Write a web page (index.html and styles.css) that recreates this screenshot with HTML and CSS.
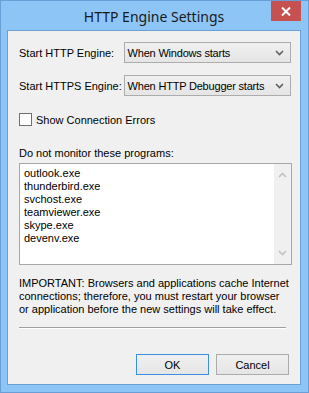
FILE: index.html
```html
<!DOCTYPE html>
<html lang="en">
<head>
    <meta charset="UTF-8">
    <meta name="viewport" content="width=device-width, initial-scale=1.0">
    <title>HTTP Engine Settings</title>
    <link rel="stylesheet" href="styles.css">
</head>
<body>

<div class="window">
    <!-- Title bar -->
    <div class="titlebar">
        <span class="title">HTTP Engine Settings</span>
        <button class="close-button">
            <svg width="10" height="9" viewBox="0 0 10 9">
                <path d="M1 0.5 L9 8.5 M9 0.5 L1 8.5" stroke="#fff" stroke-width="2"/>
            </svg>
        </button>
    </div>

    <!-- Dialog body -->
    <div class="client">
        <div class="field-row">
            <label class="field-label">Start HTTP Engine:</label>
            <div class="combo">
                <span>When Windows starts</span>
                <svg width="9" height="6" viewBox="0 0 9 6"><path d="M1 1 L4.5 4.5 L8 1" fill="none" stroke="#606060" stroke-width="1.6"/></svg>
            </div>
        </div>

        <div class="field-row">
            <label class="field-label">Start HTTPS Engine:</label>
            <div class="combo">
                <span>When HTTP Debugger starts</span>
                <svg width="9" height="6" viewBox="0 0 9 6"><path d="M1 1 L4.5 4.5 L8 1" fill="none" stroke="#606060" stroke-width="1.6"/></svg>
            </div>
        </div>

        <label class="check-row">
            <span class="checkbox"></span>
            Show Connection Errors
        </label>

        <div class="list-label">Do not monitor these programs:</div>
        <div class="listbox">
            <div class="list-text">
                outlook.exe<br>
                thunderbird.exe<br>
                svchost.exe<br>
                teamviewer.exe<br>
                skype.exe<br>
                devenv.exe
            </div>
            <div class="scrollbar">
                <svg width="9" height="6" viewBox="0 0 9 6"><path d="M1 5 L4.5 1.5 L8 5" fill="none" stroke="#c2c2c2" stroke-width="1.6"/></svg>
                <svg width="9" height="6" viewBox="0 0 9 6"><path d="M1 1 L4.5 4.5 L8 1" fill="none" stroke="#c2c2c2" stroke-width="1.6"/></svg>
            </div>
        </div>

        <p class="note">IMPORTANT: Browsers and applications cache Internet<br>connections; therefore, you must restart your browser<br>or application before the new settings will take effect.</p>

        <div class="separator"></div>

        <div class="buttons">
            <button class="btn btn-default">OK</button>
            <button class="btn">Cancel</button>
        </div>
    </div>
</div>

</body>
</html>
```

FILE: styles.css
```css
body {
    margin: 0;
    font-family: "Liberation Sans", Arial, sans-serif;
    font-size: 11px;
    color: #000;
    background-color: #8ec5f7;
}
.window {
    width: 309px;
    height: 393px;
    box-sizing: border-box;
    border: 1px solid #6a9ed6;
    background-color: #8ec5f7; /* light blue frame */
    padding: 0 7px 0 6px;
}
.titlebar {
    position: relative;
    height: 29px;
    display: flex;
    justify-content: center;
    align-items: center;
}
.title {
    font-family: "Noto Sans", sans-serif;
    font-size: 14px;
    color: #1a1a1a;
    margin-top: 1px;
}
.close-button {
    position: absolute;
    top: 0;
    right: 0;
    width: 30px;
    height: 20px;
    border: none;
    padding: 0;
    background-color: #c75050;
    display: flex;
    justify-content: center;
    align-items: center;
}
.client {
    height: 355px;
    box-sizing: border-box;
    border: 1px solid #6c9fd4;
    background-color: #f0f0f0;
    padding: 11px 9px 0 11px;
}
.field-row {
    display: flex;
    align-items: center;
    margin-bottom: 12px;
}
.field-label {
    width: 105px;
}
.combo {
    width: 168px;
    height: 21px;
    box-sizing: border-box;
    border: 1px solid #acacac;
    background: linear-gradient(#f0f0f0, #e5e5e5);
    display: flex;
    align-items: center;
    justify-content: space-between;
    padding: 0 6px 0 3px;
    letter-spacing: -0.2px;
}
.check-row {
    display: flex;
    align-items: center;
    gap: 4px;
    margin-top: 17px;
    height: 13px;
}
.checkbox {
    width: 13px;
    height: 13px;
    box-sizing: border-box;
    border: 1px solid #707070;
    background-color: #fff;
}
.list-label {
    margin-top: 21px;
    line-height: 13px;
}
.listbox {
    margin-top: 3px;
    width: 273px;
    height: 102px;
    box-sizing: border-box;
    border: 1px solid #a8a8a8;
    background-color: #fff;
    display: flex;
    justify-content: space-between;
}
.list-text {
    padding: 3px 4px;
    line-height: 13px;
}
.scrollbar {
    width: 17px;
    background-color: #f0f0f0;
    display: flex;
    flex-direction: column;
    justify-content: space-between;
    align-items: center;
    padding: 8px 0;
}
.note {
    margin: 12px 0 0 0;
    line-height: 13px;
    width: 280px;
    white-space: nowrap;
}
.separator {
    margin-top: 11px;
    width: 267px;
    height: 1px;
    background-color: #a0a0a0;
    border-bottom: 1px solid #fff;
}
.buttons {
    display: flex;
    justify-content: flex-end;
    gap: 7px;
    margin-top: 25px;
    padding-right: 2px;
}
.btn {
    width: 73px;
    height: 21px;
    border: 1px solid #acacac;
    background: linear-gradient(#f0f0f0, #e5e5e5);
    font-family: "Liberation Sans", Arial, sans-serif;
    font-size: 11px;
    color: #000;
    padding: 0;
}
.btn-default {
    border-color: #3c8fe0;
}
```
